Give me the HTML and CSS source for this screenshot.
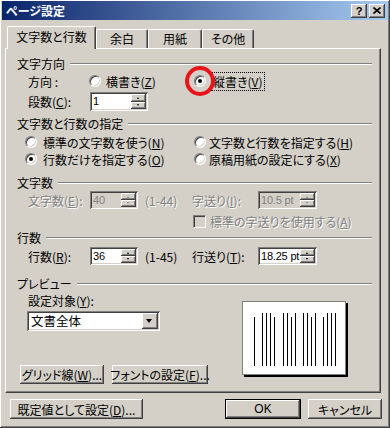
FILE: index.html
```html
<!DOCTYPE html>
<html lang="ja">
<head>
<meta charset="utf-8">
<title>ページ設定</title>
<link rel="stylesheet" href="styles.css">
</head>
<body>
<div class="window">
  <div class="titlebar">
    <span class="title">ページ設定</span>
    <div class="tbtns">
      <span class="tbtn q">?</span>
      <span class="tbtn"><svg width="8" height="7" viewBox="0 0 8 7"><path d="M0.5 0.5 L7.5 6.5 M7.5 0.5 L0.5 6.5" stroke="#000" stroke-width="1.6"/></svg></span>
    </div>
  </div>

  <div class="tabs">
    <div class="tab sel">文字数と行数</div>
    <div class="tab t2">余白</div>
    <div class="tab t3">用紙</div>
    <div class="tab t4">その他</div>
  </div>

  <div class="panel">
    <div class="ghead h1"><span>文字方向</span><i class="groove"></i></div>
    <div class="row row1">
      <span class="lbl l61">方向 :</span>
      <span class="radio"></span><span class="rtext w88">横書き(<u>Z</u>)</span>
      <span class="radio on marked"></span><span class="rtext focus">縦書き(<u>V</u>)</span>
    </div>
    <div class="row row2">
      <span class="lbl l62">段数(<u>C</u>):</span>
      <span class="spin w58 h19"><span class="field">1</span><span class="btns"><span class="sb up"></span><span class="sb dn"></span></span></span>
    </div>

    <div class="ghead h2"><span>文字数と行数の指定</span><i class="groove"></i></div>
    <div class="row r3">
      <span class="opt"><span class="radio"></span><span class="rtext">標準の文字数を使う(<u>N</u>)</span></span>
      <span class="opt"><span class="radio"></span><span class="rtext">文字数と行数を指定する(<u>H</u>)</span></span>
    </div>
    <div class="row r4">
      <span class="opt"><span class="radio on"></span><span class="rtext">行数だけを指定する(<u>O</u>)</span></span>
      <span class="opt"><span class="radio"></span><span class="rtext">原稿用紙の設定にする(<u>X</u>)</span></span>
    </div>

    <div class="ghead h3"><span>文字数</span><i class="groove"></i></div>
    <div class="row r5 disabled">
      <span class="lbl l62">文字数(<u>E</u>):</span>
      <span class="spin w48 off"><span class="field">40</span><span class="btns"><span class="sb up"></span><span class="sb dn"></span></span></span>
      <span class="range">(1-44)</span>
      <span class="lbl l66">字送り(<u>I</u>):</span>
      <span class="spin w59 off"><span class="field">10.5 pt</span><span class="btns"><span class="sb up"></span><span class="sb dn"></span></span></span>
    </div>
    <div class="row r6 disabled">
      <span class="check"></span><span class="rtext">標準の字送りを使用する(<u>A</u>)</span>
    </div>

    <div class="ghead h4"><span>行数</span><i class="groove"></i></div>
    <div class="row r7">
      <span class="lbl l62">行数(<u>R</u>):</span>
      <span class="spin w48"><span class="field">36</span><span class="btns"><span class="sb up"></span><span class="sb dn"></span></span></span>
      <span class="range">(1-45)</span>
      <span class="lbl l66">行送り(<u>T</u>):</span>
      <span class="spin w59"><span class="field">18.25 pt</span><span class="btns"><span class="sb up"></span><span class="sb dn"></span></span></span>
    </div>

    <div class="ghead h5"><span>プレビュー</span><i class="groove"></i></div>
    <div class="preview">
      <div class="pleft">
        <div class="plabel">設定対象(<u>Y</u>):</div>
        <div class="select"><span class="stext">文書全体</span><span class="dd"></span></div>
        <div class="pbtns">
          <span class="btn gb">グリッド線(<u>W</u>)...</span>
          <span class="btn fb">フォントの設定(<u>F</u>)...</span>
        </div>
      </div>
      <div class="pbox">
        <svg width="104" height="74" viewBox="0 0 104 74">
          <g stroke="#000" stroke-width="1">
            <path d="M12.5 16 V65"/>
            <path d="M20.5 12 V65"/>
            <path d="M24.5 12 V65"/>
            <path d="M28.5 12 V65"/>
            <path d="M32.5 16 V65"/>
            <path d="M41.5 12 V65"/>
            <path d="M45.5 12 V65"/>
            <path d="M49.5 16 V65"/>
            <path d="M53.5 12 V65"/>
            <path d="M61.5 12 V65"/>
            <path d="M65.5 12 V65"/>
            <path d="M69.5 16 V65"/>
            <path d="M73.5 12 V65"/>
            <path d="M81.5 16 V65"/>
            <path d="M85.5 12 V65"/>
            <path d="M89.5 12 V65"/>
            <path d="M93.5 12 V65"/>
          </g>
        </svg>
      </div>
    </div>
  </div>

  <div class="footer">
    <span class="btn def-set">既定値として設定(<u>D</u>)...</span>
    <span class="spacer"></span>
    <span class="btn ok">OK</span>
    <span class="btn cancel">キャンセル</span>
  </div>
</div>
</body>
</html>
```

FILE: styles.css
```css
html, body {
  margin: 0;
  padding: 0;
  background: #d4d0c8;
}
body {
  font-family: "Noto Sans CJK JP", "Liberation Sans", sans-serif;
  font-size: 12px;
  font-feature-settings: "palt" 1;
  color: #000;
}
u { text-decoration: underline; text-underline-offset: 1px; }

.window {
  position: relative;
  width: 390px;
  height: 428px;
  box-sizing: border-box;
  padding: 1px 2px 0 2px;
  background: #d4d0c8;
  box-shadow: inset -1px -1px #404040, inset 1px 1px #ffffff, inset -2px -2px #808080;
  display: flex;
  flex-direction: column;
}

/* title bar */
.titlebar {
  height: 19px;
  display: flex;
  align-items: center;
  justify-content: space-between;
  padding: 0 3px 0 4px;
  background: linear-gradient(to right, #0a246a, #a6caf0);
}
.title {
  color: #fff;
  font-weight: bold;
  font-size: 12px;
  line-height: 14px;
}
.tbtns { display: flex; gap: 2px; }
.tbtn {
  width: 16px;
  height: 14px;
  box-sizing: border-box;
  background: #d4d0c8;
  box-shadow: inset -1px -1px #404040, inset 1px 1px #ffffff, inset -2px -2px #808080;
  display: flex;
  align-items: center;
  justify-content: center;
  font-family: "Liberation Sans", sans-serif;
  font-weight: bold;
  font-size: 11px;
  line-height: 12px;
}

/* tabs */
.tabs {
  display: flex;
  align-items: flex-end;
  height: 22px;
  margin-top: 6px;
  padding-left: 5px;
  position: relative;
  z-index: 2;
}
.tab {
  height: 19px;
  box-sizing: border-box;
  line-height: 18px;
  text-align: center;
  border-top: 1px solid #fff;
  border-left: 1px solid #fff;
  border-right: 1px solid #404040;
  box-shadow: inset -1px 0 #808080;
  border-radius: 2px 2px 0 0;
  background: #d4d0c8;
}
.tab.sel {
  width: 89px;
  height: 23px;
  line-height: 20px;
  margin-bottom: -1px;
}
.t2 { width: 52px; }
.t3 { width: 54px; }
.t4 { width: 52px; }

/* panel */
.panel {
  width: 376px;
  height: 345px;
  box-sizing: border-box;
  margin-left: 3px;
  padding: 0 8px 0 11px;
  border-top: 1px solid #fff;
  border-left: 1px solid #fff;
  border-right: 1px solid #404040;
  border-bottom: 1px solid #404040;
  box-shadow: inset -1px -1px #808080;
  display: flex;
  flex-direction: column;
}

.ghead {
  display: flex;
  align-items: center;
  height: 14px;
  line-height: 14px;
}
.groove {
  flex: 1;
  height: 0;
  margin-left: 5px;
  border-top: 1px solid #808080;
  border-bottom: 1px solid #fff;
}
.h1 { margin-top: 8px; }
.h2 { margin-top: 6px; }
.h3 { margin-top: 9px; }
.h4 { margin-top: 3px; }
.h5 { margin-top: 12px; }

.row {
  display: flex;
  align-items: center;
  padding-left: 11px;
}
.row1 { height: 20px; }
.row2 { height: 19px; margin-top: 1px; }
.r3 { height: 16px; margin-top: 3px; padding-left: 8px; }
.r4 { height: 16px; margin-top: 1px; padding-left: 8px; }
.r5 { height: 18px; margin-top: 1px; }
.r6 { height: 14px; margin-top: 5px; padding-left: 176px; }
.r7 { height: 18px; margin-top: 2px; }

.lbl { flex: none; white-space: pre; }
.l61 { width: 61px; }
.l62 { width: 62px; }
.l66 { width: 66px; }

.rtext { margin-left: 4px; white-space: nowrap; }
.w88 { width: 88px; margin-left: 5px; }
.opt { display: flex; align-items: center; }
.opt:first-child { width: 169px; }
.opt .rtext { margin-left: 6px; }
.opt:last-child .rtext { margin-left: 3px; }

.range { width: 47px; margin-left: 7px; }

.focus {
  outline: 1px dotted #000;
  outline-offset: 0;
  padding: 0 1px;
  margin-left: 6px;
}

/* radio */
.radio {
  flex: none;
  position: relative;
  width: 12px;
  height: 12px;
  box-sizing: border-box;
  border-radius: 50%;
  background: #fff;
  border: 1px solid;
  border-color: #808080 #ffffff #ffffff #808080;
  box-shadow: inset 1px 1px #404040, inset -1px -1px #d4d0c8;
}
.radio.on::before {
  content: "";
  position: absolute;
  left: 3px;
  top: 3px;
  width: 4px;
  height: 4px;
  border-radius: 50%;
  background: #000;
}
.marked::after {
  content: "";
  position: absolute;
  left: -10px;
  top: -10px;
  width: 22px;
  height: 22px;
  border: 4px solid #e8141b;
  border-radius: 50%;
}

/* checkbox */
.check {
  flex: none;
  width: 13px;
  height: 13px;
  box-sizing: border-box;
  background: #d4d0c8;
  border: 1px solid;
  border-color: #808080 #ffffff #ffffff #808080;
  box-shadow: inset 1px 1px #404040, inset -1px -1px #d4d0c8;
}
.r6 .rtext { margin-left: 4px; }

.disabled, .disabled .lbl, .disabled .range, .disabled .rtext {
  color: #808080;
  text-shadow: 1px 1px 0 #fff;
}

/* spinner */
.spin {
  flex: none;
  display: flex;
  height: 18px;
  box-sizing: border-box;
  padding: 2px;
  background: #fff;
  box-shadow: inset 1px 1px #808080, inset -1px -1px #ffffff, inset 2px 2px #404040, inset -2px -2px #d4d0c8;
}
.spin.h19 { height: 19px; }
.w48 { width: 48px; }
.w58 { width: 58px; }
.w59 { width: 59px; }
.spin .field {
  flex: 1;
  min-width: 0;
  padding-left: 1px;
  line-height: 14px;
  white-space: nowrap;
  font-family: "Liberation Sans", "Noto Sans CJK JP", sans-serif;
  font-size: 11px;
  letter-spacing: -0.2px;
}
.spin.off { background: #d4d0c8; }
.spin.off .field { color: #808080; text-shadow: none; }
.spin .btns {
  width: 15px;
  flex: none;
  display: flex;
  flex-direction: column;
}
.sb {
  flex: 1;
  position: relative;
  background: #d4d0c8;
  box-shadow: inset -1px -1px #404040, inset 1px 1px #ffffff, inset -2px -2px #808080;
}
.sb::after {
  content: "";
  position: absolute;
  left: 6px;
  width: 0;
  height: 0;
  border-left: 1.5px solid transparent;
  border-right: 1.5px solid transparent;
}
.sb.up::after { top: 3px; border-bottom: 2px solid #000; }
.sb.dn::after { top: 2px; border-top: 2px solid #000; }
.off .sb.up::after { border-bottom-color: #808080; }
.off .sb.dn::after { border-top-color: #808080; }

/* preview */
.preview {
  display: flex;
}
.pleft {
  width: 225px;
  display: flex;
  flex-direction: column;
}
.plabel {
  height: 14px;
  line-height: 14px;
  margin-top: 3px;
  padding-left: 11px;
}
.select {
  width: 133px;
  height: 20px;
  margin-top: 3px;
  margin-left: 10px;
  box-sizing: border-box;
  padding: 2px;
  background: #fff;
  display: flex;
  box-shadow: inset 1px 1px #808080, inset -1px -1px #ffffff, inset 2px 2px #404040, inset -2px -2px #d4d0c8;
}
.stext { flex: 1; line-height: 16px; padding-left: 2px; font-size: 12.5px; }
.dd {
  width: 16px;
  position: relative;
  background: #d4d0c8;
  box-shadow: inset -1px -1px #404040, inset 1px 1px #ffffff, inset -2px -2px #808080;
}
.dd::after {
  content: "";
  position: absolute;
  left: 4px;
  top: 6px;
  border-left: 3.5px solid transparent;
  border-right: 3.5px solid transparent;
  border-top: 4px solid #000;
}
.pbtns {
  display: flex;
  gap: 8px;
  margin-top: 34px;
  padding-left: 3px;
}
.btn {
  height: 19px;
  box-sizing: border-box;
  display: flex;
  align-items: center;
  justify-content: center;
  background: #d4d0c8;
  box-shadow: inset -1px -1px #404040, inset 1px 1px #ffffff, inset -2px -2px #808080;
  white-space: nowrap;
}
.gb { width: 84px; }
.fb { width: 96px; }

.pbox {
  width: 104px;
  height: 74px;
  margin-top: 10px;
  box-sizing: border-box;
  background: #fff;
  border: 1px solid #808080;
  box-shadow: 2px 2px 0 #000;
}
.pbox svg { display: block; margin: -1px; }

/* footer */
.footer {
  display: flex;
  margin-top: 6px;
  padding-left: 8px;
  padding-right: 6px;
}
.footer .btn { height: 20px; }
.def-set { width: 133px; }
.spacer { flex: 1; }
.ok {
  width: 76px;
  box-shadow: inset 0 0 0 1px #000, inset -2px -2px #404040, inset 2px 2px #ffffff, inset -3px -3px #808080;
  font-family: "Liberation Sans", sans-serif;
}
.cancel { width: 74px; margin-left: 7px; }
```
